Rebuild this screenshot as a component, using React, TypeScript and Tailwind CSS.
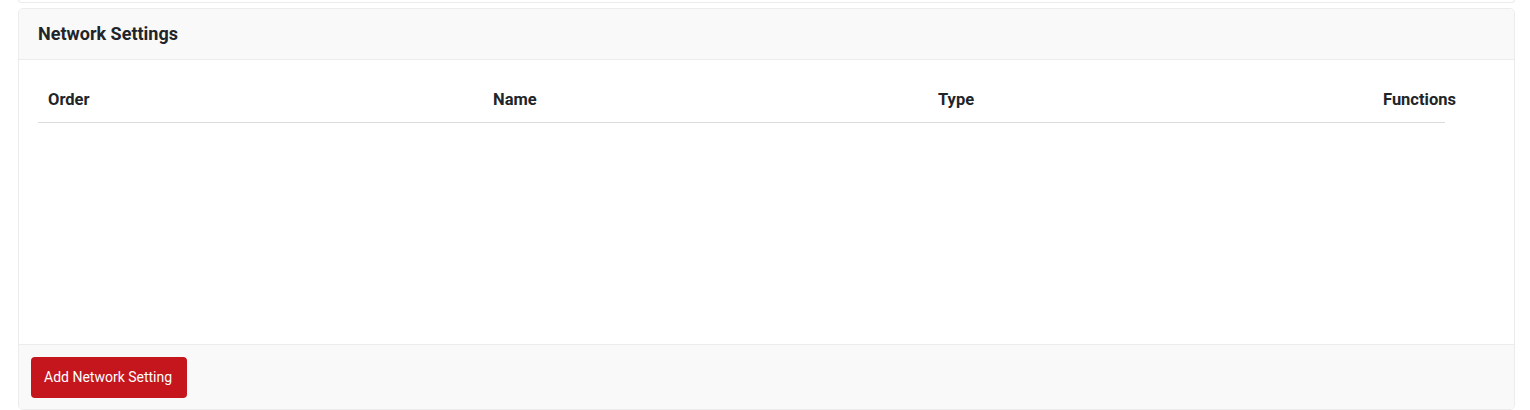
const cols = ['Order', 'Name', 'Type', 'Functions']

export default function App() {
  return (
    <div className="min-h-[410px] bg-white font-['Roboto',sans-serif] text-[#212529]">
      <div className="ml-[18px] mr-[15px] h-[3px] rounded-b-[5px] border border-t-0 border-[#ececec] bg-white" />
      <div className="ml-[18px] mr-[15px] mt-[5px] overflow-hidden rounded-[5px] border border-[#ececec]">
        <div className="flex h-[51px] items-center border-b border-[#ececec] bg-[#f9f9f9] px-[19px] pb-[2px]">
          <h2 className="text-[18px] font-bold">Network Settings</h2>
        </div>
        <div className="h-[284px] bg-white px-[19px] pt-[18px]">
          <div className="flex">
            {cols.map((c) => (
              <div key={c} className="w-[445px] shrink-0 px-[10px] pt-[11px] pb-[11px] text-[16.5px] leading-[22px] font-bold">
                {c}
              </div>
            ))}
          </div>
          <div className="w-[1407px] border-t border-[#dcdcdc]" />
        </div>
        <div className="flex h-[65px] items-start border-t border-[#ececec] bg-[#f9f9f9] px-[12px] pt-[12px]">
          <button className="h-[41px] rounded-[4px] bg-[#c4161c] pl-[13px] pr-[15px] text-[14px] text-white">
            Add Network Setting
          </button>
        </div>
      </div>
    </div>
  )
}
